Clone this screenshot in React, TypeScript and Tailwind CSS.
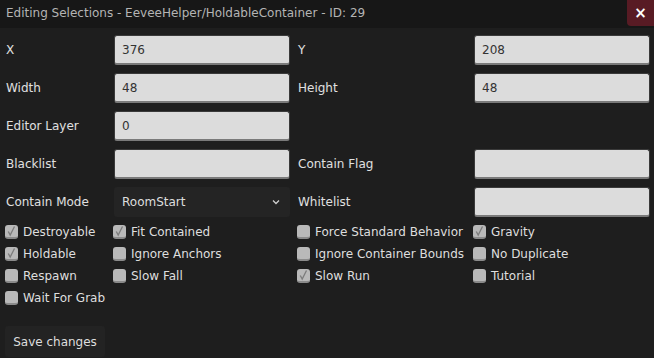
import React from "react";

const font = { fontFamily: '"DejaVu Sans", "Liberation Sans", sans-serif' };

function Input({ value }: { value?: string }) {
  return (
    <div className="h-[30px] w-[176px] rounded-[3px] bg-[#dcdcdc] border border-[#3a3a3a] border-b-2 border-b-[#7a7a7a] flex items-center px-[7px] text-[12px] text-[#333]">
      {value}
    </div>
  );
}

function Label({ children }: { children: React.ReactNode }) {
  return <div className="h-[30px] flex items-center text-[12px] text-[#e0e0e0]">{children}</div>;
}

function Check({ label, checked }: { label: string; checked?: boolean }) {
  return (
    <div className="h-[22px] flex items-center gap-[5px] -ml-px">
      <div className="w-[13px] h-[14px] rounded-[3px] bg-[#b9b9b9] border-b-2 border-b-[#8a8a8a] flex items-center justify-center">
        {checked && (
          <svg width="11" height="12" viewBox="0 0 11 12">
            <path d="M2.3 6.5 L4.2 10 L8.5 1.5" fill="none" stroke="#7c7c7c" strokeWidth="1.3" />
          </svg>
        )}
      </div>
      <span className="text-[12px] text-[#dedede] whitespace-nowrap">{label}</span>
    </div>
  );
}

export default function App() {
  return (
    <div className="w-[654px] h-[358px] bg-[#1e1e1e] overflow-hidden flex flex-col" style={font}>
      <div className="h-[28px] bg-[#171717] flex items-start justify-between shrink-0">
        <div className="h-[26px] flex items-center pl-[6px] text-[12px] text-[#b4b4b4] whitespace-nowrap">
          Editing Selections - EeveeHelper/HoldableContainer - ID: 29
        </div>
        <div className="w-[27px] h-[26px] bg-[#581b24] rounded-bl-[4px] flex items-center justify-center text-white text-[15px] font-bold leading-none">
          ×
        </div>
      </div>
      <div className="pl-[6px] pt-[7px] grid grid-cols-[108px_184px_176px_176px] gap-y-[8px]">
        <Label>X</Label>
        <Input value="376" />
        <Label>Y</Label>
        <Input value="208" />

        <Label>Width</Label>
        <Input value="48" />
        <Label>Height</Label>
        <Input value="48" />

        <Label>Editor Layer</Label>
        <Input value="0" />
        <div />
        <div />

        <Label>Blacklist</Label>
        <Input />
        <Label>Contain Flag</Label>
        <Input />

        <Label>Contain Mode</Label>
        <div className="h-[30px] w-[176px] rounded-[3px] bg-[#242424] flex items-center justify-between pl-[8px] pr-[10px] text-[12px] text-[#dedede]">
          <span>RoomStart</span>
          <svg width="8" height="6" viewBox="0 0 8 6">
            <path d="M1 1.5 L4 4.5 L7 1.5" fill="none" stroke="#cfcfcf" strokeWidth="1.3" />
          </svg>
        </div>
        <Label>Whitelist</Label>
        <Input />
      </div>
      <div className="pl-[6px] pt-[4px] grid grid-cols-[108px_184px_176px_176px]">
        <Check label="Destroyable" checked />
        <Check label="Fit Contained" checked />
        <Check label="Force Standard Behavior" />
        <Check label="Gravity" checked />

        <Check label="Holdable" checked />
        <Check label="Ignore Anchors" />
        <Check label="Ignore Container Bounds" />
        <Check label="No Duplicate" />

        <Check label="Respawn" />
        <Check label="Slow Fall" />
        <Check label="Slow Run" checked />
        <Check label="Tutorial" />

        <Check label="Wait For Grab" />
      </div>
      <div className="pl-[5px] pt-[17px]">
        <div className="w-[100px] h-[31px] rounded-[3px] bg-[#232323] flex items-center justify-center text-[12px] text-[#dedede]">
          Save changes
        </div>
      </div>
    </div>
  );
}
